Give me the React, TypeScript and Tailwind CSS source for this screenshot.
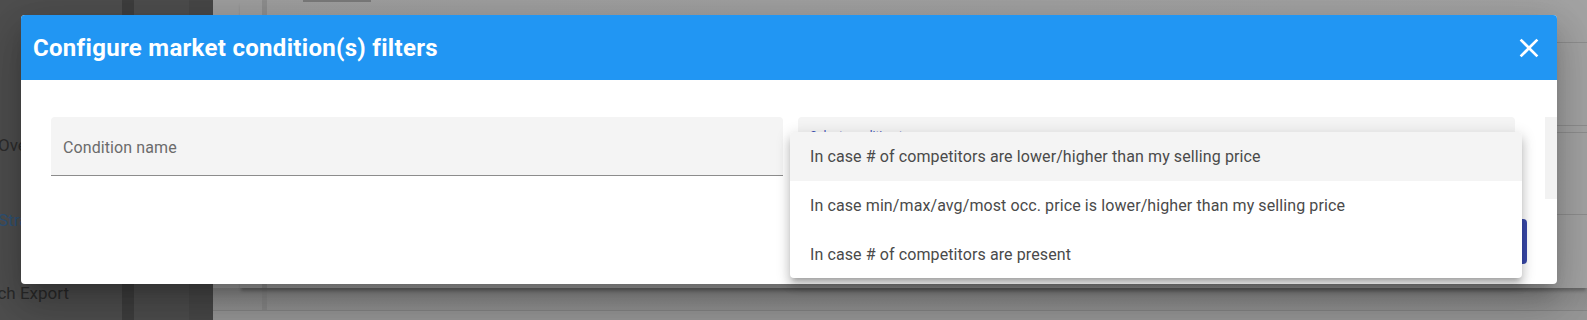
import React from "react";

const items = [
  "In case # of competitors are lower/higher than my selling price",
  "In case min/max/avg/most occ. price is lower/higher than my selling price",
  "In case # of competitors are present",
];

export default function App() {
  return (
    <div
      className="relative h-[320px] w-full overflow-hidden bg-[#9e9e9e]"
      style={{ fontFamily: "Roboto, 'Noto Sans', sans-serif" }}
    >
      {/* dimmed page behind the dialog */}
      <div className="flex h-full">
        <div className="relative w-[122px] shrink-0 bg-[#4e4e4e] text-[17px]">
          <div className="absolute left-[-2px] top-[133px] text-[#2c2c2c]">Overview</div>
          <div className="absolute left-[-2px] top-[208px] text-[#2f5277]">Strategies</div>
          <div className="absolute left-[-28px] top-[281px] text-[#2a2a2a]">Batch Export</div>
        </div>
        <div className="w-[12px] shrink-0 bg-[#3e3e3e]" />
        <div className="w-[55px] shrink-0 bg-[#4d4d4d]" />
        <div className="w-[24px] shrink-0 bg-[#474747]" />
        <div className="flex flex-1 flex-col bg-[#9e9e9e]">
          <div className="flex h-[288px] shrink-0">
            <div className="w-[27px] shrink-0" />
            <div className="relative flex flex-1 flex-col bg-gradient-to-r from-[#9e9e9e] to-[#a3a3a3] shadow-[0_4px_3px_-1px_rgba(0,0,0,0.25)]">
              <div className="absolute left-[63px] top-0 h-[2px] w-[68px] bg-[#7a7a7a]" />
              <div className="h-[43px] border-b border-[#8e8e8e]" />
              <div className="h-[83px] border-b border-[#8e8e8e]" />
              <div className="h-[7px] border-b border-[#8e8e8e]" />
              <div className="h-[82px] border-b border-[#8e8e8e]" />
              <div className="flex-1" />
            </div>
          </div>
          <div className="flex h-[23px] shrink-0 border-b border-[#858585] bg-gradient-to-b from-[#8a8a8a] to-[#939393]">
            <div className="ml-[49px] w-[5px] bg-[#888888]" />
          </div>
          <div className="flex-1 bg-[#979797]" />
        </div>
      </div>
      <div className="absolute left-[262px] top-0 h-[288px] w-[5px] bg-[#8e8e8e]" />

      {/* dialog */}
      <div className="absolute left-[21px] top-[15px] flex h-[269px] w-[1536px] flex-col overflow-hidden rounded-[4px] bg-white shadow-[0_11px_15px_-7px_rgba(0,0,0,0.2),0_24px_38px_3px_rgba(0,0,0,0.14),0_9px_46px_8px_rgba(0,0,0,0.12)]">
        <div className="flex h-[65px] shrink-0 items-center justify-between bg-[#2196f3] pl-[12px] pr-[12px]">
          <h2 className="text-[24px] font-bold leading-none tracking-[0.3px] text-white">
            Configure market condition(s) filters
          </h2>
          <svg width="32" height="32" viewBox="0 0 24 24" fill="#ffffff" aria-label="close">
            <path d="M19 6.41 17.59 5 12 10.59 6.41 5 5 6.41 10.59 12 5 17.59 6.41 19 12 13.41 17.59 19 19 17.59 13.41 12z" />
          </svg>
        </div>
        <div className="flex pl-[30px] pt-[37px]">
          <div className="flex h-[59px] w-[732px] shrink-0 items-center rounded-t-[4px] border-b border-[#8c8c8c] bg-[#f4f4f4] px-[12px] pt-[4px]">
            <span className="text-[16px] tracking-[0.1px] text-[#6b6b6b]">Condition name</span>
          </div>
          <div className="ml-[15px] flex w-[729px] shrink-0 flex-col">
            <div className="relative h-[59px] w-[717px] rounded-t-[4px] border-b border-[#8c8c8c] bg-[#f4f4f4]">
              <span className="absolute left-[12px] top-[10px] text-[12px] text-[#3f51b5]">
                Select condition type
              </span>
            </div>
            <div className="mt-[43px] h-[45px] w-[140px] self-end rounded-[4px] bg-[#3949ab]" />
          </div>
          <div className="ml-[18px] h-[82px] w-[300px] shrink-0 bg-[#f2f2f2]" />
        </div>
      </div>

      {/* dropdown menu */}
      <div className="absolute left-[790px] top-[132px] w-[732px] overflow-hidden rounded-[4px] bg-white shadow-[0_5px_5px_-3px_rgba(0,0,0,0.2),0_8px_10px_1px_rgba(0,0,0,0.14),0_3px_14px_2px_rgba(0,0,0,0.12)]">
        {items.map((t, i) => (
          <div
            key={t}
            className={
              i === 0
                ? "flex h-[49px] items-center bg-[#f4f4f4] px-[20px] text-[16px] tracking-[0.1px] text-[#4a4a4a]"
                : i === 1
                ? "flex h-[49px] items-center px-[20px] text-[16px] tracking-[0.1px] text-[#4a4a4a]"
                : "flex h-[48px] items-center px-[20px] pt-[2px] text-[16px] tracking-[0.1px] text-[#4a4a4a]"
            }
          >
            {t}
          </div>
        ))}
      </div>
    </div>
  );
}
